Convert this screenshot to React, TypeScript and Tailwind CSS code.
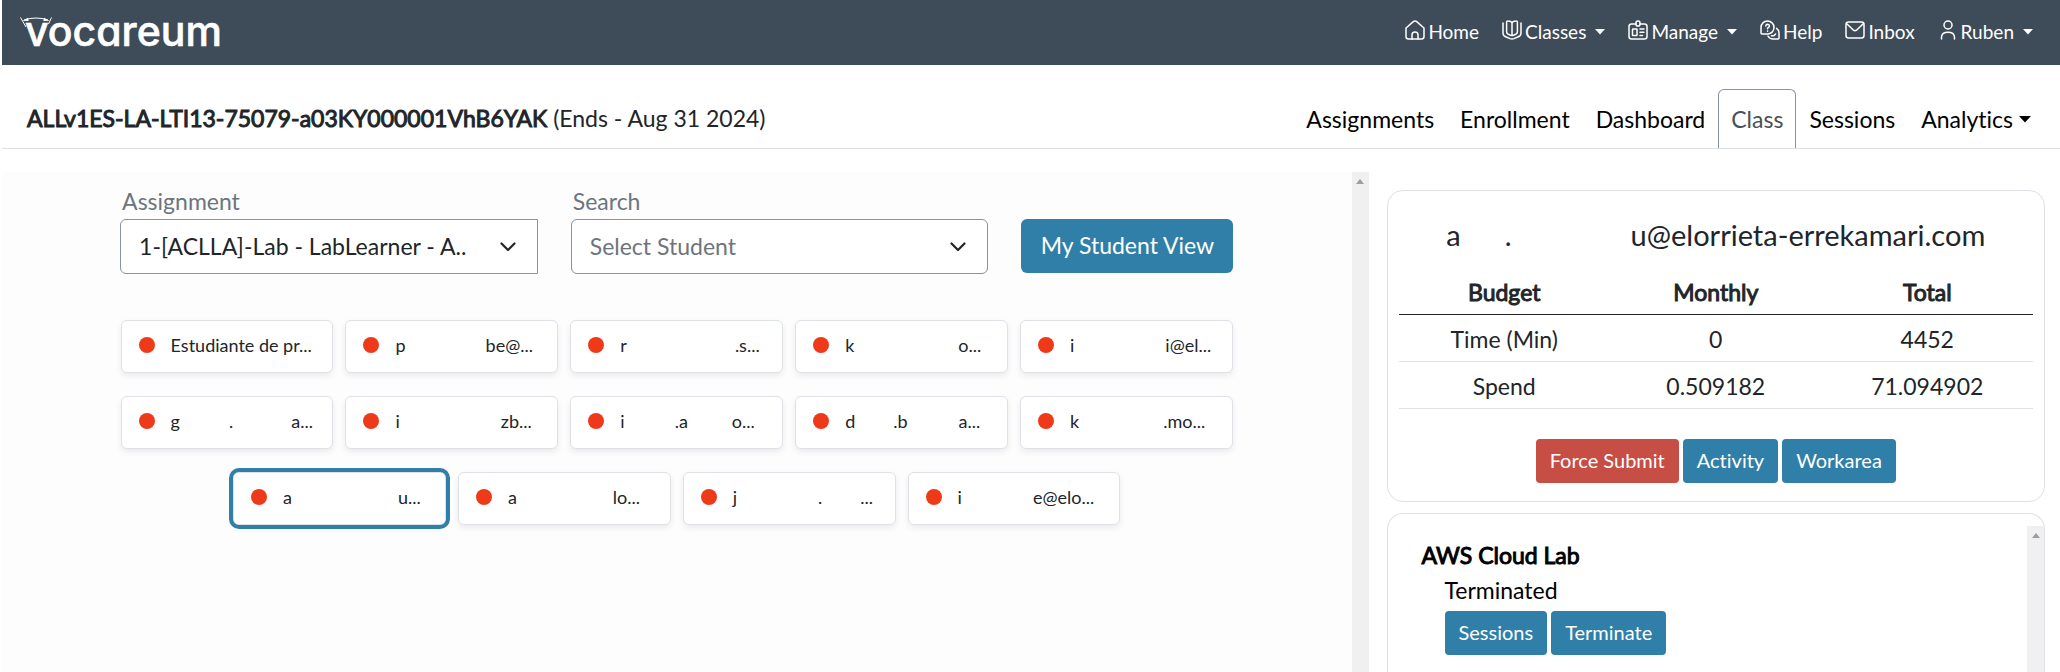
import React from "react";

type Segment = { gap?: number; text: string };
type Student = { id: string; segments: Segment[]; selected?: boolean };

const students: Student[] = [
  { id: "s1", segments: [{ text: "Estudiante de pr..." }] },
  { id: "s2", segments: [{ text: "p" }, { gap: 80, text: "be@..." }] },
  { id: "s3", segments: [{ text: "r" }, { gap: 108, text: ".s..." }] },
  { id: "s4", segments: [{ text: "k" }, { gap: 104, text: "o..." }] },
  { id: "s5", segments: [{ text: "i" }, { gap: 91, text: "i@el..." }] },
  { id: "s6", segments: [{ text: "g" }, { gap: 49, text: "." }, { gap: 58, text: "a..." }] },
  { id: "s7", segments: [{ text: "i" }, { gap: 101, text: "zb..." }] },
  { id: "s8", segments: [{ text: "i" }, { gap: 50, text: ".a" }, { gap: 44, text: "o..." }] },
  { id: "s9", segments: [{ text: "d" }, { gap: 38, text: ".b" }, { gap: 51, text: "a..." }] },
  { id: "s10", segments: [{ text: "k" }, { gap: 84, text: ".mo..." }] },
  { id: "s11", segments: [{ text: "a" }, { gap: 106, text: "u..." }], selected: true },
  { id: "s12", segments: [{ text: "a" }, { gap: 96, text: "lo..." }] },
  { id: "s13", segments: [{ text: "j" }, { gap: 81, text: "." }, { gap: 38, text: "..." }] },
  { id: "s14", segments: [{ text: "i" }, { gap: 71, text: "e@elo..." }] },
];

const budget = [
  ["Time (Min)", "0", "4452"],
  ["Spend", "0.509182", "71.094902"],
];

function Segments({ items }: { items: Segment[] }) {
  return (
    <span className="flex whitespace-nowrap">
      {items.map((s, i) => (
        <React.Fragment key={i}>
          {s.gap ? <span className="shrink-0" style={{ width: s.gap }} /> : null}
          <span>{s.text}</span>
        </React.Fragment>
      ))}
    </span>
  );
}

function Logo() {
  return (
    <svg width="202" height="31" viewBox="0 0 202 31" role="img" aria-label="vocareum" className="block overflow-visible">
      <text
        x="5"
        y="29"
        fill="#fff"
        stroke="#fff"
        strokeWidth="0.6"
        className="font-[Inter,sans-serif] text-[41px] font-medium [font-feature-settings:'cv11']"
      >
        vocareum
      </text>
      <path d="M0.5 0.5 L6 10 M31.5 0.5 L28.5 7" stroke="#fff" strokeWidth="1" fill="none" />
      <path d="M4 3 Q16 -1 28 3" stroke="#fff" strokeWidth="1" fill="none" />
      <path d="M2.5 3.8 L8 0.8 L8.6 4 Z M29.5 3.8 L24 0.8 L23.4 4 Z" fill="#fff" />
    </svg>
  );
}

function Icon({ children }: { children: React.ReactNode }) {
  return (
    <svg
      width="20"
      height="20"
      viewBox="0 0 20 20"
      fill="none"
      stroke="currentColor"
      strokeWidth="1.5"
      strokeLinecap="round"
      strokeLinejoin="round"
      aria-hidden="true"
      className="mb-1 shrink-0"
    >
      {children}
    </svg>
  );
}

const icons = {
  home: (
    <Icon>
      <path d="M1 8 L8.6 1.4 Q10 0.4 11.4 1.4 L19 8 V16.5 Q19 19 16.5 19 H3.5 Q1 19 1 16.5 Z" />
      <path d="M7 19 V15 a3 3 0 0 1 6 0 V19" />
    </Icon>
  ),
  classes: (
    <Icon>
      <path d="M1 3 V13 Q1 15.8 3.6 16.8 L8 18.6 Q10 19.3 12 18.6 L16.4 16.8 Q19 15.8 19 13 V3" />
      <path d="M4.6 2.6 Q4.6 0.8 6.2 0.9 Q10 1 10 3.6 Q10 1 13.8 0.9 Q15.4 0.8 15.4 2.6 V11.8 Q15.4 13.6 13.8 14.2 L11.4 15.2 Q10 15.7 8.6 15.2 L6.2 14.2 Q4.6 13.6 4.6 11.8 Z M10 3.6 V15" />
    </Icon>
  ),
  manage: (
    <Icon>
      <path d="M8 4 H3.5 Q1 4 1 6.5 V16.5 Q1 19 3.5 19 H16.5 Q19 19 19 16.5 V6.5 Q19 4 16.5 4 H12" />
      <rect x="8" y="1" width="4" height="5" rx="1.8" />
      <rect x="4.5" y="9" width="4.5" height="6.5" rx="0.5" />
      <path d="M12 9 H16 M12 12.2 H16 M12 15.4 H14.5" />
    </Icon>
  ),
  help: (
    <Icon>
      <path d="M1 13 V7.5 A6.5 6.5 0 0 1 14 7.5 A6.5 6.5 0 0 1 7.5 14 H2 Q1 14 1 13 Z" />
      <path d="M5.8 6 Q6 4.3 7.6 4.3 Q9.4 4.4 9.4 6 Q9.4 7.2 7.6 8.2 V8.8 M7.6 11 V11.2" />
      <path d="M8 16 Q9.5 19 13 19 H18 Q19 19 19 18 V13 Q19 10 16.6 8.4 M11.5 15.8 H13.8 L15.6 14" />
    </Icon>
  ),
  inbox: (
    <Icon>
      <rect x="1" y="2" width="18" height="16" rx="2.5" />
      <path d="M1.5 3.5 L8.5 10.2 Q10 11.4 11.5 10.2 L18.5 3.5" />
    </Icon>
  ),
  user: (
    <Icon>
      <circle cx="10" cy="5" r="4" />
      <path d="M3.5 19 V17 Q4 12.2 10 12.2 Q16 12.2 16.5 17 V19" />
    </Icon>
  ),
};

function TopLink({ icon, label, menu }: { icon: React.ReactNode; label: string; menu?: boolean }) {
  return (
    <a href="#" className="flex items-center gap-[3px] whitespace-nowrap">
      {icon}
      <span>{label}</span>
      {menu && (
        <svg width="10" height="6" viewBox="0 0 10 6" aria-hidden="true" className="ml-[6px] shrink-0">
          <path d="M0 0 H10 L5 5.5 Z" fill="currentColor" />
        </svg>
      )}
    </a>
  );
}

function Select({ id, label, value, className }: { id: string; label: string; value: string; className: string }) {
  return (
    <div className="min-w-0 flex-1">
      <label htmlFor={id} className="block pb-[2px] pl-[2px] leading-[31px] text-[#6c757d]">
        {label}
      </label>
      <div className="relative">
        <select
          id={id}
          className={`h-[55px] w-full appearance-none border border-[#8a90a6] bg-white pr-12 pb-[2px] pl-[18px] ${className}`}
        >
          <option>{value}</option>
        </select>
        <svg
          width="16"
          height="10"
          viewBox="0 0 16 10"
          fill="none"
          stroke="#212529"
          strokeWidth="2.2"
          strokeLinecap="round"
          strokeLinejoin="round"
          aria-hidden="true"
          className="pointer-events-none absolute top-[23px] right-[22px]"
        >
          <path d="M1.5 1.5 L8 8 L14.5 1.5" />
        </svg>
      </div>
    </div>
  );
}

function ScrollBar() {
  return (
    <div className="flex w-[17px] shrink-0 justify-center bg-[#f0f0f0] pt-[7px]">
      <svg width="8" height="5" viewBox="0 0 8 5" aria-hidden="true">
        <path d="M0 5 L4 0 L8 5 Z" fill="#9d9d9d" />
      </svg>
    </div>
  );
}

function SmallButton({ label, danger }: { label: string; danger?: boolean }) {
  return (
    <button
      type="button"
      className={`h-11 rounded px-[14px] pb-[2px] text-[20px] whitespace-nowrap text-white ${danger ? "bg-[#c64e44]" : "bg-[#307fa8]"}`}
    >
      {label}
    </button>
  );
}

const fauxBold = "font-normal [-webkit-text-stroke:1px_currentColor]";

export default function App() {
  return (
    <div className="flex min-h-screen flex-col bg-white pl-[2px] font-[Lato,sans-serif] text-[23px] leading-[34px] text-[#212529] [font-variant-ligatures:none]">
      <header className="flex h-[65px] items-center justify-between bg-[#3e4b58] pr-[27px] pl-[18px] text-[19px] text-white">
        <a href="#">
          <Logo />
        </a>
        <nav className="flex items-center gap-[23px] pb-[2px]">
          <TopLink icon={icons.home} label="Home" />
          <TopLink icon={icons.classes} label="Classes" menu />
          <TopLink icon={icons.manage} label="Manage" menu />
          <TopLink icon={icons.help} label="Help" />
          <TopLink icon={icons.inbox} label="Inbox" />
          <TopLink icon={icons.user} label="Ruben" menu />
        </nav>
      </header>

      <div className="flex items-end justify-between border-b border-[#dee2e6] pt-6 pr-4 pl-[25px]">
        <h1 className="leading-[59px] whitespace-nowrap">
          <span className={fauxBold}>ALLv1ES-LA-LTI13-75079-a03KY000001VhB6YAK</span> (Ends - Aug 31 2024)
        </h1>
        <nav className="flex leading-[58px] text-black">
          <a href="#" className="px-[13px] pt-px">Assignments</a>
          <a href="#" className="px-[13px] pt-px">Enrollment</a>
          <a href="#" className="px-[13px] pt-px">Dashboard</a>
          <a href="#" className="rounded-t-md border border-b-0 border-[#8a90a6] px-3 text-[#495057]">Class</a>
          <a href="#" className="px-[13px] pt-px">Sessions</a>
          <a href="#" className="flex items-center gap-[6px] px-[13px] pt-px">
            Analytics
            <svg width="12" height="7" viewBox="0 0 12 7" aria-hidden="true">
              <path d="M0 0 H12 L6 6.6 Z" fill="currentColor" />
            </svg>
          </a>
        </nav>
      </div>

      <main className="mt-[23px] flex flex-1">
        <section className="flex w-[66.4%] bg-[#fdfdfd]">
          <div className="min-w-0 flex-1 pt-[14px] pb-8">
            <div className="mx-auto w-[82.5%]">
              <div className="flex items-end gap-[33px]">
                <Select id="assignment" label="Assignment" value="1-[ACLLA]-Lab - LabLearner - A.." className="rounded-l-md" />
                <Select id="search" label="Search" value="Select Student" className="rounded-md text-[#6c757d]" />
                <button type="button" className="mb-px h-[54px] w-[212px] rounded-md bg-[#307fa8] pb-[2px] text-white">
                  My Student View
                </button>
              </div>
              <div className="mt-[46px] flex flex-wrap justify-center gap-x-3 gap-y-[23px]">
                {students.map((s) => (
                  <button
                    key={s.id}
                    type="button"
                    className={`flex h-[53px] w-[calc((100%-49px)/5)] items-center gap-4 rounded-md border border-[#dee2e6] bg-white pb-[3px] pl-[17px] text-lg shadow-[0_3px_6px_rgba(0,0,0,0.08)] ${
                      s.selected ? "outline-4 outline-[#307fa8]" : ""
                    }`}
                  >
                    <span className="size-4 shrink-0 rounded-full bg-[#ee3a18]" />
                    <Segments items={s.segments} />
                  </button>
                ))}
              </div>
            </div>
          </div>
          <ScrollBar />
        </section>

        <aside className="flex flex-1 flex-col gap-[11px] pt-[18px] pr-[15px] pl-[18px]">
          <section className="rounded-2xl border border-[#dee2e6] px-[11px] pb-[18px]">
            <h2 className="flex justify-center pt-[21px] text-[29px] leading-[46px]">
              <Segments items={[{ text: "a" }, { gap: 44, text: "." }, { gap: 119, text: "u@elorrieta-errekamari.com" }]} />
            </h2>
            <table className="mt-[10px] w-full table-fixed border-separate border-spacing-0 text-center">
              <thead>
                <tr className="h-[47px]">
                  {["Budget", "Monthly", "Total"].map((h) => (
                    <th key={h} scope="col" className={`border-b border-[#212529] pt-px ${fauxBold}`}>{h}</th>
                  ))}
                </tr>
              </thead>
              <tbody>
                {budget.map((row) => (
                  <tr key={row[0]} className="h-[47px]">
                    {row.map((c) => (
                      <td key={c} className="border-b border-[#dee2e6] pt-px">{c}</td>
                    ))}
                  </tr>
                ))}
              </tbody>
            </table>
            <div className="mt-[30px] flex justify-center gap-1">
              <SmallButton label="Force Submit" danger />
              <SmallButton label="Activity" />
              <SmallButton label="Workarea" />
            </div>
          </section>

          <section className="flex flex-1 rounded-t-2xl border border-b-0 border-[#dee2e6] pt-3">
            <div className="flex-1 pt-[11px] pl-[34px] text-black">
              <h3 className={`${fauxBold} leading-[36px]`}>AWS Cloud Lab</h3>
              <div className="pl-[23px]">
                <p className="leading-[34px]">Terminated</p>
                <div className="mt-1 flex gap-1">
                  <SmallButton label="Sessions" />
                  <SmallButton label="Terminate" />
                </div>
              </div>
            </div>
            <ScrollBar />
          </section>
        </aside>
      </main>
    </div>
  );
}
